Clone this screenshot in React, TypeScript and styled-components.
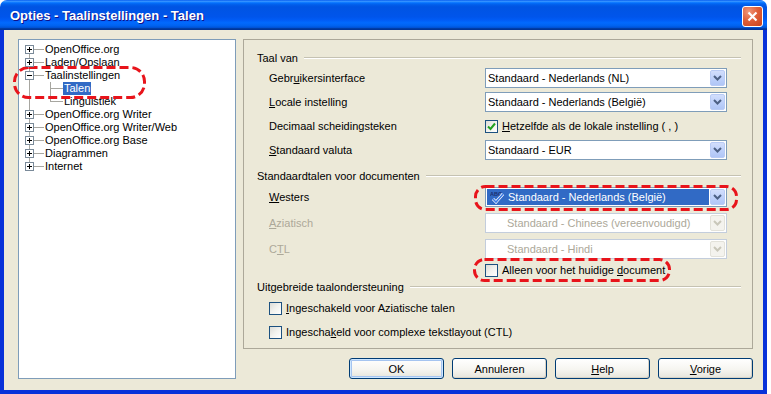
import React from 'react';
import styled, { createGlobalStyle, css } from 'styled-components';

type Line = 'full' | 'top' | 'bottom';

interface ITreeItem {
    label: string
    level: 0 | 1
    box?: 'plus' | 'minus'
    root: Line
    child?: Line
    selected?: boolean
}

const tree: ITreeItem[] = [
    { label: 'OpenOffice.org', level: 0, box: 'plus', root: 'bottom' },
    { label: 'Laden/Opslaan', level: 0, box: 'plus', root: 'full' },
    { label: 'Taalinstellingen', level: 0, box: 'minus', root: 'full' },
    { label: 'Talen', level: 1, root: 'full', child: 'full', selected: true },
    { label: 'Linguistiek', level: 1, root: 'full', child: 'top' },
    { label: 'OpenOffice.org Writer', level: 0, box: 'plus', root: 'full' },
    { label: 'OpenOffice.org Writer/Web', level: 0, box: 'plus', root: 'full' },
    { label: 'OpenOffice.org Base', level: 0, box: 'plus', root: 'full' },
    { label: 'Diagrammen', level: 0, box: 'plus', root: 'full' },
    { label: 'Internet', level: 0, box: 'plus', root: 'top' },
];

const GlobalStyle = createGlobalStyle`
    html, body {
        margin: 0;
        padding: 0;
        background: #fff;
    }
    body {
        font-family: "Liberation Sans", Arial, sans-serif;
        font-size: 11px;
        color: #000;
    }
    #root {
        position: relative;
        width: 771px;
        height: 394px;
        overflow: hidden;
    }
`;

const Window = styled.div`
    width: 767px;
    height: 394px;
    display: flex;
    flex-direction: column;
`;

const TitleBar = styled.div`
    height: 30px;
    flex: none;
    display: flex;
    align-items: center;
    justify-content: space-between;
    padding: 0 4px 0 10px;
    border-radius: 7px 7px 0 0;
    background: linear-gradient(to bottom, #0058ee 0%, #3a93ff 4%, #288eff 6%, #127dff 8%, #036ffc 10%,
        #0262ee 14%, #0057e5 20%, #0054e3 24%, #0055eb 56%, #005bf5 66%, #026afe 76%, #0062ef 86%,
        #0052d6 92%, #0040ab 94%, #003092 100%);
`;

const Title = styled.span`
    color: #fff;
    font-weight: bold;
    font-size: 13px;
    padding-top: 1px;
    text-shadow: 1px 1px 0 #0f1089;
`;

const CloseButton = styled.div`
    width: 21px;
    height: 21px;
    margin-top: 2px;
    box-sizing: border-box;
    border: 1px solid #fff;
    border-radius: 3px;
    background: radial-gradient(circle at 30% 25%, #f0977a 0%, #e0603a 45%, #c8421c 100%);
    display: grid;
    place-items: center;
`;

const Body = styled.div`
    flex: 1;
    background: #ece9d8;
    border: 4px solid #0831d9;
    border-top: none;
    display: grid;
    grid-template-columns: 218px 510px;
    column-gap: 7px;
    align-items: start;
    padding: 9px 10px 0 14px;
`;

const TreeBox = styled.div`
    height: 340px;
    box-sizing: border-box;
    background: #fff;
    border: 1px solid #7f9db9;
    padding-top: 3px;
`;

const TreeRow = styled.div`
    display: flex;
    height: 13px;
`;

const Guide = styled.span<{ $w: number; $x: number; $line: Line; $branch?: boolean }>`
    position: relative;
    flex: none;
    width: ${({ $w }) => $w}px;
    &::before {
        content: '';
        position: absolute;
        left: ${({ $x }) => $x}px;
        top: ${({ $line }) => ($line === 'bottom' ? '6px' : '0')};
        bottom: ${({ $line }) => ($line === 'top' ? '6px' : '0')};
        border-left: 1px solid #a7a6a0;
    }
    ${({ $branch, $x }) => $branch && css`
        &::after {
            content: '';
            position: absolute;
            left: ${$x}px;
            right: 0;
            top: 6px;
            border-top: 1px solid #a7a6a0;
        }
    `}
`;

const Expander = styled.svg`
    position: absolute;
    left: 6px;
    top: 2px;
    z-index: 1;
`;

const NodeLabel = styled.span<{ $selected?: boolean }>`
    padding: 0 1px;
    line-height: 13px;
    white-space: nowrap;
    ${({ $selected }) => $selected && css`
        background: #316ac5;
        color: #fff;
    `}
`;

const RightCol = styled.div`
    display: flex;
    flex-direction: column;
`;

const Frame = styled.div`
    height: 310px;
    box-sizing: border-box;
    border: 1px solid #aca899;
    padding: 11px 11px 0 13px;
`;

const SectionHead = styled.div<{ $mt?: number }>`
    display: flex;
    align-items: center;
    gap: 6px;
    height: 14px;
    margin-top: ${({ $mt }) => $mt ?? 0}px;
    white-space: nowrap;
    &::after {
        content: '';
        flex: 1;
        border-top: 1px solid #c5c2b2;
        border-bottom: 1px solid #fff;
    }
`;

const FormRow = styled.div<{ $mt: number; $h?: number }>`
    display: flex;
    align-items: center;
    height: ${({ $h }) => $h ?? 20}px;
    margin-top: ${({ $mt }) => $mt}px;
    margin-left: 12px;
`;

const FieldLabel = styled.span<{ $disabled?: boolean }>`
    width: 216px;
    flex: none;
    color: ${({ $disabled }) => ($disabled ? '#aca899' : '#000')};
`;

const Combo = styled.div<{ $disabled?: boolean }>`
    width: 242px;
    height: 20px;
    box-sizing: border-box;
    border: 1px solid ${({ $disabled }) => ($disabled ? '#c3cddc' : '#7f9db9')};
    background: #fff;
    display: flex;
    align-items: center;
    padding: 0 1px 0 2px;
    color: ${({ $disabled }) => ($disabled ? '#aca899' : '#000')};
`;

const ComboField = styled.span<{ $focus?: boolean; $indent?: boolean }>`
    flex: 1;
    height: 16px;
    display: flex;
    align-items: center;
    white-space: nowrap;
    margin-left: ${({ $focus }) => ($focus ? '-1px' : '0')};
    padding-left: ${({ $indent }) => ($indent ? '19px' : '0')};
    ${({ $focus }) => $focus && css`
        background: #316ac5;
        color: #fff;
        padding-left: 3px;
        margin-right: 1px;
    `}
`;

const SpellIcon = styled.svg`
    flex: none;
    margin-right: 2px;
`;

const ComboButton = styled.span<{ $disabled?: boolean }>`
    width: 15px;
    height: 16px;
    flex: none;
    box-sizing: border-box;
    border-radius: 2px;
    display: grid;
    place-items: center;
    ${({ $disabled }) => $disabled ? css`
        background: #f4f3ee;
        border: 1px solid #e3e2da;
    ` : css`
        background: linear-gradient(to bottom, #d2defc 0%, #bccffa 60%, #b0c6f6 100%);
        border: 1px solid #b9cbf5;
    `}
`;

const CheckLabel = styled.label<{ $disabled?: boolean }>`
    display: inline-flex;
    align-items: center;
    gap: 4px;
    white-space: nowrap;
    color: ${({ $disabled }) => ($disabled ? '#aca899' : '#000')};
`;

const CheckBox = styled.span`
    width: 13px;
    height: 13px;
    flex: none;
    box-sizing: border-box;
    border: 1px solid #1c5180;
    background: linear-gradient(135deg, #dcdcd7 0%, #f2f2ee 50%, #fff 100%);
    display: grid;
    place-items: center;
`;

const ButtonRow = styled.div`
    display: flex;
    justify-content: flex-end;
    gap: 8px;
    margin-top: 9px;
`;

const Button = styled.button<{ $default?: boolean }>`
    width: 95px;
    height: 21px;
    box-sizing: border-box;
    border: 1px solid #003c74;
    border-radius: 3px;
    padding: 0;
    background: linear-gradient(to bottom, #fff 0%, #f6f5f0 55%, #e6e4db 100%);
    font-family: "Liberation Sans", Arial, sans-serif;
    font-size: 11px;
    color: #000;
    box-shadow: ${({ $default }) => ($default
        ? 'inset 0 0 0 1px #cee7ff, inset 0 0 0 2px #a5c4f0'
        : 'inset -1px -1px 0 #d8d3c6')};
`;

const Annotations = styled.svg`
    position: absolute;
    left: 0;
    top: 0;
    pointer-events: none;
`;

const Arrow = ({ disabled }: { disabled?: boolean }) => (
    <svg width="9" height="6" viewBox="0 0 9 6">
        <path d="M1 1 L4.5 4.5 L8 1" fill="none" stroke={disabled ? '#c9c7ba' : '#4d6185'} strokeWidth="2" />
    </svg>
);

const Tick = () => (
    <svg width="9" height="9" viewBox="0 0 9 9">
        <path d="M1 4.5 L3.5 7 L8 1.5" fill="none" stroke="#21a121" strokeWidth="2" />
    </svg>
);

const ExpanderBox = ({ kind }: { kind: 'plus' | 'minus' }) => (
    <Expander width="9" height="9" viewBox="0 0 9 9">
        <rect x="0.5" y="0.5" width="8" height="8" fill="#fff" stroke="#7a8a99" />
        <path d="M2 4.5 H7" stroke="#000" />
        {kind === 'plus' && <path d="M4.5 2 V7" stroke="#000" />}
    </Expander>
);

const Tree = () => (
    <TreeBox>
        {tree.map(item => (
            <TreeRow key={item.label}>
                <Guide $w={25} $x={10} $line={item.root} $branch={item.level === 0}>
                    {item.box && <ExpanderBox kind={item.box} />}
                </Guide>
                {item.level === 1 && <Guide $w={19} $x={6} $line={item.child || 'full'} $branch />}
                <NodeLabel $selected={item.selected}>{item.label}</NodeLabel>
            </TreeRow>
        ))}
    </TreeBox>
);

const App = () => {
    return <>
        <GlobalStyle />
        <Window>
            <TitleBar>
                <Title>Opties - Taalinstellingen - Talen</Title>
                <CloseButton>
                    <svg width="11" height="11" viewBox="0 0 11 11">
                        <path d="M1.5 1.5 L9.5 9.5 M9.5 1.5 L1.5 9.5" stroke="#fff" strokeWidth="2.2" />
                    </svg>
                </CloseButton>
            </TitleBar>
            <Body>
                <Tree />
                <RightCol>
                    <Frame>
                        <SectionHead>Taal van</SectionHead>
                        <FormRow $mt={3}>
                            <FieldLabel>Gebr<u>u</u>ikersinterface</FieldLabel>
                            <Combo>
                                <ComboField>Standaard - Nederlands (NL)</ComboField>
                                <ComboButton><Arrow /></ComboButton>
                            </Combo>
                        </FormRow>
                        <FormRow $mt={4}>
                            <FieldLabel><u>L</u>ocale instelling</FieldLabel>
                            <Combo>
                                <ComboField>Standaard - Nederlands (België)</ComboField>
                                <ComboButton><Arrow /></ComboButton>
                            </Combo>
                        </FormRow>
                        <FormRow $mt={4}>
                            <FieldLabel>Decimaal scheidingsteken</FieldLabel>
                            <CheckLabel>
                                <CheckBox><Tick /></CheckBox>
                                <span><u>H</u>etzelfde als de lokale instelling ( , )</span>
                            </CheckLabel>
                        </FormRow>
                        <FormRow $mt={4}>
                            <FieldLabel><u>S</u>tandaard valuta</FieldLabel>
                            <Combo>
                                <ComboField>Standaard - EUR</ComboField>
                                <ComboButton><Arrow /></ComboButton>
                            </Combo>
                        </FormRow>

                        <SectionHead $mt={9}>Standaardtalen voor documenten</SectionHead>
                        <FormRow $mt={4}>
                            <FieldLabel><u>W</u>esters</FieldLabel>
                            <Combo>
                                <ComboField $focus>
                                    <SpellIcon width="16" height="14" viewBox="0 0 16 14">
                                        <text x="0" y="5.5" fontSize="5.5" fontWeight="bold" fill="#1c2f6e"
                                            fontFamily="Liberation Sans, Arial, sans-serif">ABC</text>
                                        <path d="M3 9 L6 12 L13 4" fill="none" stroke="#fff" strokeWidth="3" />
                                        <path d="M3 9 L6 12 L13 4" fill="none" stroke="#3b7be6" strokeWidth="1.6" />
                                    </SpellIcon>
                                    Standaard - Nederlands (België)
                                </ComboField>
                                <ComboButton><Arrow /></ComboButton>
                            </Combo>
                        </FormRow>
                        <FormRow $mt={6}>
                            <FieldLabel $disabled><u>A</u>ziatisch</FieldLabel>
                            <Combo $disabled>
                                <ComboField $indent>Standaard - Chinees (vereenvoudigd)</ComboField>
                                <ComboButton $disabled><Arrow disabled /></ComboButton>
                            </Combo>
                        </FormRow>
                        <FormRow $mt={6}>
                            <FieldLabel $disabled>C<u>T</u>L</FieldLabel>
                            <Combo $disabled>
                                <ComboField $indent>Standaard - Hindi</ComboField>
                                <ComboButton $disabled><Arrow disabled /></ComboButton>
                            </Combo>
                        </FormRow>
                        <FormRow $mt={3} $h={16}>
                            <FieldLabel />
                            <CheckLabel>
                                <CheckBox />
                                <span>Alleen voor het huidige <u>d</u>ocument</span>
                            </CheckLabel>
                        </FormRow>

                        <SectionHead $mt={2}>Uitgebreide taalondersteuning</SectionHead>
                        <FormRow $mt={6} $h={16}>
                            <CheckLabel>
                                <CheckBox />
                                <span><u>I</u>ngeschakeld voor Aziatische talen</span>
                            </CheckLabel>
                        </FormRow>
                        <FormRow $mt={8} $h={16}>
                            <CheckLabel>
                                <CheckBox />
                                <span>Ingescha<u>k</u>eld voor complexe tekstlayout (CTL)</span>
                            </CheckLabel>
                        </FormRow>
                    </Frame>
                    <ButtonRow>
                        <Button $default>OK</Button>
                        <Button>Annuleren</Button>
                        <Button><u>H</u>elp</Button>
                        <Button><u>V</u>orige</Button>
                    </ButtonRow>
                </RightCol>
            </Body>
        </Window>
        <Annotations width="771" height="394" viewBox="0 0 771 394">
            <g fill="none" stroke="#e8141b" strokeWidth="3" strokeDasharray="9 4">
                <rect x="14.5" y="67.5" width="130" height="30" rx="14" />
                <rect x="475.5" y="186.5" width="261" height="23" rx="10" />
                <rect x="474.5" y="259.5" width="195" height="21" rx="10" />
            </g>
        </Annotations>
    </>
}

export default App;
